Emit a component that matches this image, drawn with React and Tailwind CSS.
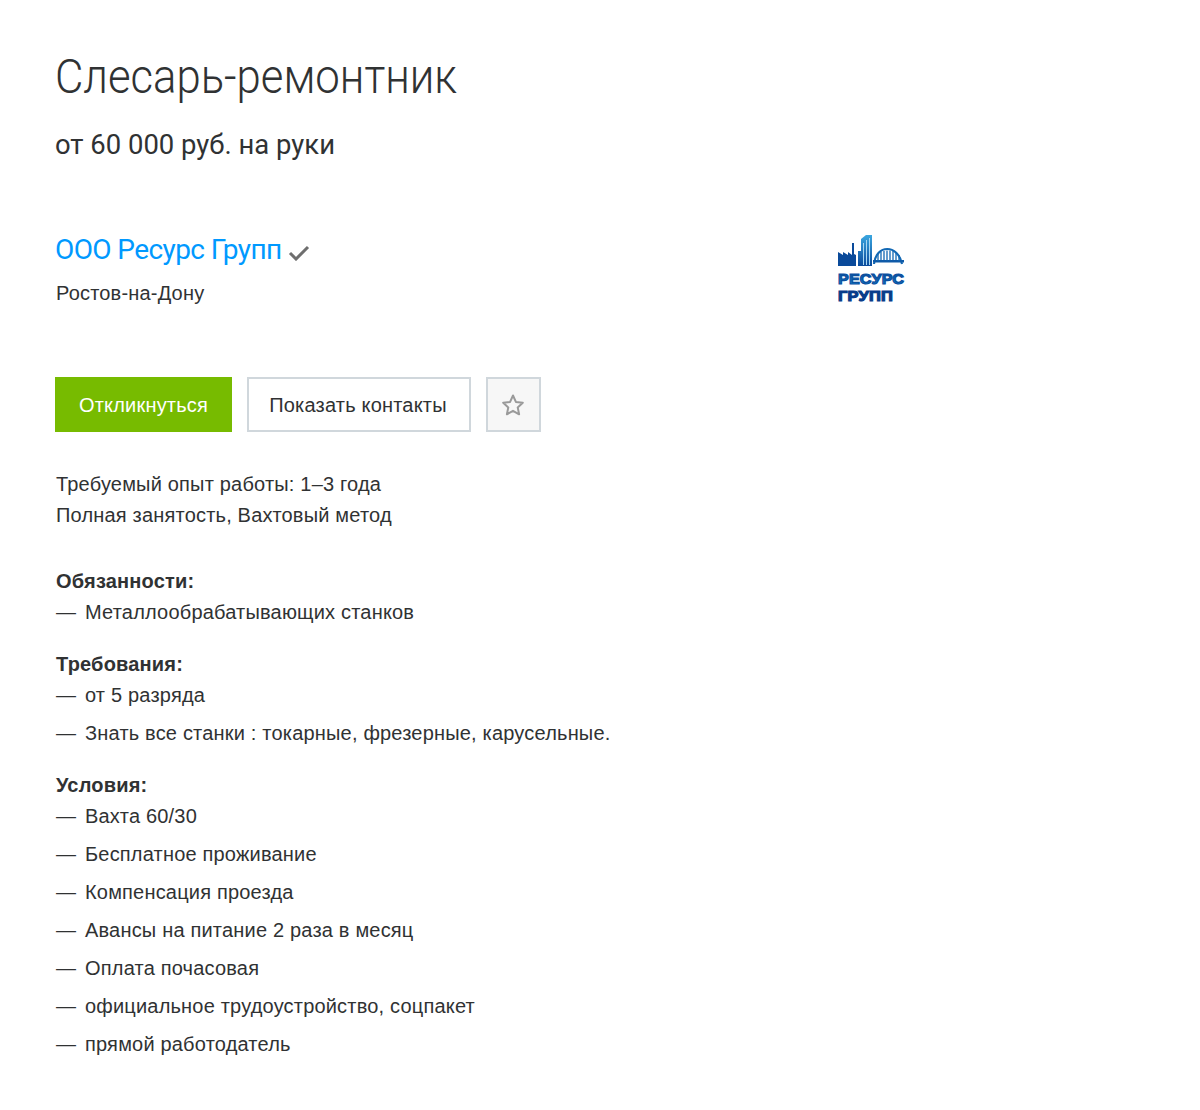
import React from 'react';

const Logo = () => (
  <svg width="68" height="68" viewBox="0 0 68 68" className="block mt-[3px]">
    <defs>
      <linearGradient id="logoBlue" x1="0" y1="0" x2="0" y2="1">
        <stop offset="0" stopColor="#3ba7e0" />
        <stop offset="1" stopColor="#0a4a9c" />
      </linearGradient>
      <linearGradient id="logoText" x1="0" y1="0" x2="0" y2="1">
        <stop offset="0" stopColor="#0a3f8f" />
        <stop offset="1" stopColor="#1593d6" />
      </linearGradient>
    </defs>
    {/* factory */}
    <path d="M0 31V17l5 3v-3l5 3v-3l4 3V8h2v11l2 1v11z" fill="#0a4a9a" />
    {/* tower */}
    <path d="M20 31V16h3V4l5-4h6v31z" fill="url(#logoBlue)" />
    <path d="M25 8h1v22h-1zM28 5h1v25h-1zM31 3h1v27h-1z" fill="#a9d8f2" />
    {/* bridge */}
    <path d="M36 29c2-20 24-20 28 0" fill="none" stroke="#1268b4" strokeWidth="2.2" />
    <path d="M35 25h31v2.500H35z" fill="#0f5aa8" />
    <path d="M40 19v7M43 17v8M46 16v9M49 15.500v10M52 15.500v10M55 16v9M58 17v8M61 20v6" stroke="#1268b4" strokeWidth="1.3" />
    <text x="0" y="49" fontFamily="'Liberation Sans', sans-serif" fontWeight="700" fontSize="15.500" textLength="66" lengthAdjust="spacingAndGlyphs" fill="url(#logoText)" stroke="#0b4f9f" strokeWidth="1.2">РЕСУРС</text>
    <text x="0" y="66" fontFamily="'Liberation Sans', sans-serif" fontWeight="700" fontSize="15.500" textLength="55" lengthAdjust="spacingAndGlyphs" fill="#083c8a" stroke="#083c8a" strokeWidth="1.2">ГРУПП</text>
  </svg>
);

const List = ({ title, items }) => (
  <div className="mb-[21px]">
    <div className="font-bold leading-[31px]">{title}</div>
    {items.map((item, i) => (
      <div key={i} className="leading-[31px] mb-[7px] flex">
        <span className="w-[29px] shrink-0">—</span>
        <span>{item}</span>
      </div>
    ))}
  </div>
);

export default function App() {
  return (
    <main className="min-h-[1110px] bg-white text-[#303233] pl-[55px] pt-[47px] font-['Liberation_Sans',sans-serif] text-[20px] tracking-[0.19px]">
      <h1 className="font-['Roboto',sans-serif] font-light text-[48px] leading-[60px] tracking-normal origin-left scale-x-[0.91]">Слесарь-ремонтник</h1>
      <p className="font-['Roboto',sans-serif] text-[28px] leading-[36px] mt-[20px] tracking-normal origin-left scale-x-[0.98]">от 60 000 руб. на руки</p>

      <div className="flex mt-[69px]">
        <div className="w-[783px]">
          <div className="flex items-center h-[36px]">
            <span className="font-['Roboto',sans-serif] text-[28px] text-[#0099ff] tracking-[-0.6px]">ООО Ресурс Групп</span>
            <svg width="22" height="16" viewBox="0 0 22 16" className="mt-[6px] ml-[6px]">
              <path d="M2 8l6 6L20 2" fill="none" stroke="#6e6e6e" strokeWidth="3" />
            </svg>
          </div>
          <p className="leading-[30px] mt-[10px] pl-px">Ростов-на-Дону</p>
        </div>
        <Logo />
      </div>

      <div className="flex mt-[69px]">
        <button className="h-[55px] w-[177px] bg-[#77bb00] text-white">Откликнуться</button>
        <button className="h-[55px] w-[224px] ml-[15px] pr-[2px] bg-white border-2 border-[#d0d7dc]">Показать контакты</button>
        <button className="h-[55px] w-[55px] ml-[15px] pr-[2px] bg-[#f7f7f7] border-2 border-[#d0d7dc] flex items-center justify-center">
          <svg width="24" height="24" viewBox="0 0 24 24">
            <path d="M12 2.500l2.900 6.400 6.900.8-5.100 4.700 1.400 6.900-6.100-3.500-6.100 3.500 1.400-6.900L2.200 9.700l6.900-.8z" fill="none" stroke="#9a9a9a" strokeWidth="2" strokeLinejoin="round" />
          </svg>
        </button>
      </div>

      <div className="mt-[37px] leading-[31px] pl-px">
        <p>Требуемый опыт работы: 1–3 года</p>
        <p>Полная занятость, Вахтовый метод</p>
      </div>

      <div className="mt-[35px] pl-px">
        <List title="Обязанности:" items={['Металлообрабатывающих станков']} />
        <List title="Требования:" items={['от 5 разряда', 'Знать все станки : токарные, фрезерные, карусельные.']} />
        <List
          title="Условия:"
          items={[
            'Вахта 60/30',
            'Бесплатное проживание',
            'Компенсация проезда',
            'Авансы на питание 2 раза в месяц',
            'Оплата почасовая',
            'официальное трудоустройство, соцпакет',
            'прямой работодатель',
          ]}
        />
      </div>
    </main>
  );
}
